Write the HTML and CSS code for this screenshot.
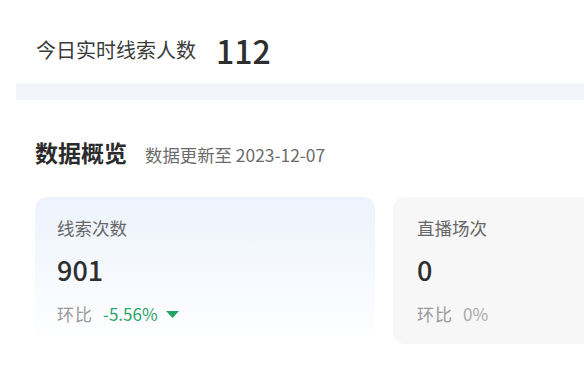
FILE: index.html
```html
<!DOCTYPE html>
<html lang="zh-CN">
<head>
    <meta charset="UTF-8">
    <meta name="viewport" content="width=device-width, initial-scale=1.0">
    <title>数据概览</title>
    <link rel="stylesheet" href="styles.css">
</head>
<body>

    <div class="page">
        <!-- Today -->
        <div class="today">
            <span class="today-label">今日实时线索人数</span>
            <span class="today-value">112</span>
        </div>

        <div class="band"></div>

        <!-- Overview -->
        <div class="overview">
            <div class="overview-head">
                <h2>数据概览</h2>
                <span class="update">数据更新至 2023-12-07</span>
            </div>

            <div class="cards">
                <div class="card active">
                    <div class="card-title">线索次数</div>
                    <div class="card-value">901</div>
                    <div class="card-ratio">
                        环比
                        <span class="ratio down">-5.56%</span>
                        <svg class="arrow" width="13" height="7" viewBox="0 0 13 7"><path d="M0 0h13L6.5 7z" fill="#1fa463"/></svg>
                    </div>
                </div>
                <div class="card">
                    <div class="card-title">直播场次</div>
                    <div class="card-value">0</div>
                    <div class="card-ratio">
                        环比
                        <span class="ratio">0%</span>
                    </div>
                </div>
            </div>
        </div>
    </div>

</body>
</html>
```

FILE: styles.css
```css
/* styles.css */

body {
    font-family: "Noto Sans CJK SC", "Noto Sans", sans-serif;
    background-color: #fff;
    color: #333;
    margin: 0;
    padding: 0;
    overflow: hidden;
}

.page {
    padding-left: 16px;
}

/* Today row */
.today {
    height: 83px;
    box-sizing: border-box;
    padding: 17px 20px 0;
    display: flex;
    align-items: center;
}

.today-label {
    font-size: 20px;
    line-height: 28px;
    color: #3a3a3a;
}

.today-value {
    font-size: 32px;
    line-height: 40px;
    font-weight: 500;
    margin-left: 20px;
    color: #2e2e2e;
}

.band {
    height: 17px;
    background-color: #f3f5fa;
}

/* Overview */
.overview {
    padding: 37px 0 0 19px;
}

.overview-head {
    display: flex;
    align-items: baseline;
}

.overview-head h2 {
    margin: 0;
    font-size: 23px;
    line-height: 30px;
    font-weight: 700;
    color: #2b2b2b;
}

.update {
    margin-left: 18px;
    font-size: 17.4px;
    color: #6b6b6b;
}

.cards {
    display: grid;
    grid-template-columns: 340px 340px;
    gap: 18px;
    margin-top: 30px;
}

.card {
    background-color: #f7f7f8;
    border-radius: 12px;
    padding: 19px 22px 18px;
}

.card + .card {
    padding-left: 24px;
}

.card.active {
    background: linear-gradient(180deg, #edf3fd 0%, #f6f9fe 55%, #fff 100%);
}

.card-title {
    font-size: 17.5px;
    line-height: 24px;
    color: #666;
}

.card-value {
    margin-top: 12px;
    font-size: 27px;
    line-height: 36px;
    font-weight: 500;
    color: #2e2e2e;
}

.card-ratio {
    margin-top: 14px;
    font-size: 17px;
    line-height: 24px;
    color: #999;
    display: flex;
    align-items: center;
    letter-spacing: 1px;
}

.ratio {
    margin-left: 10px;
    letter-spacing: 0;
    color: #aaa;
}

.ratio.down {
    color: #2aa56b;
}

.arrow {
    margin-left: 8px;
}
```
